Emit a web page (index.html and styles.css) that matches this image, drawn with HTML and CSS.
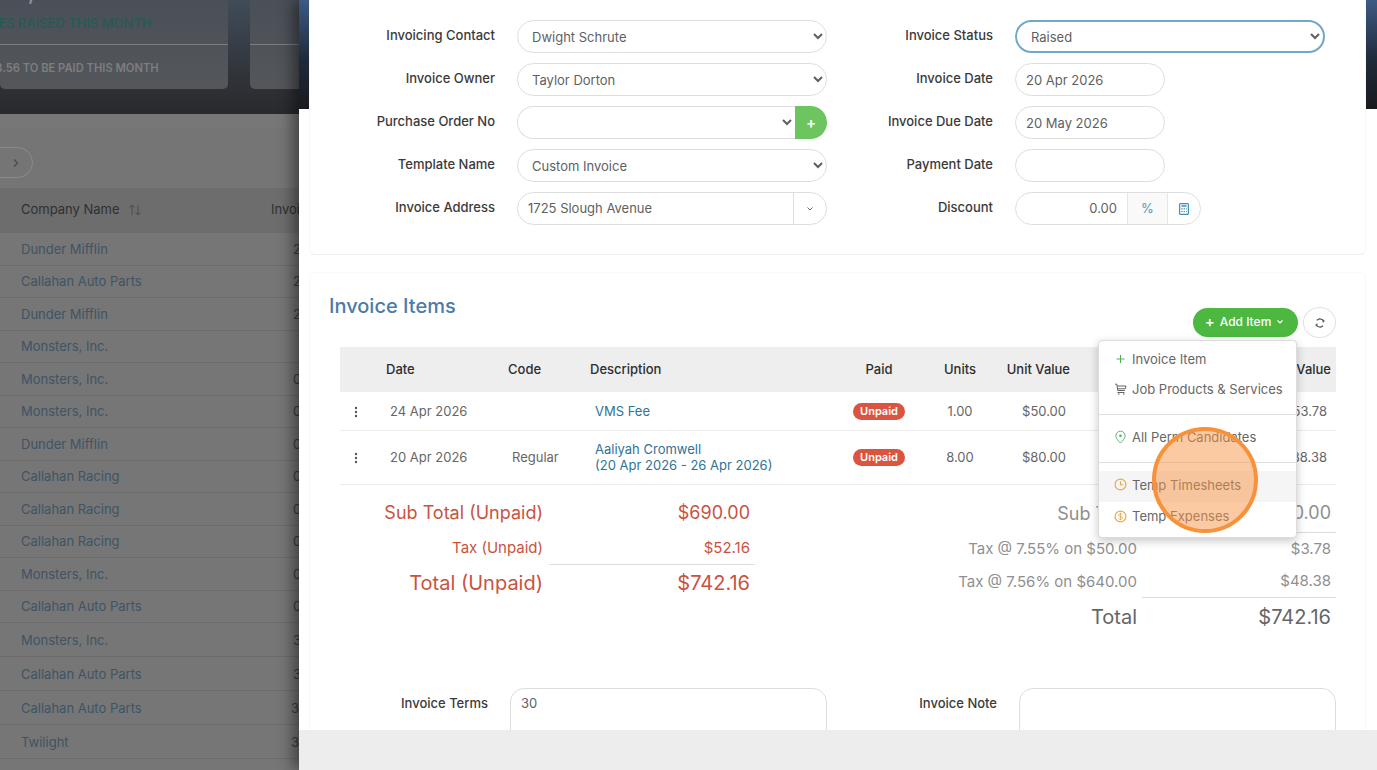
FILE: index.html
```html
<!DOCTYPE html>
<html lang="en">
<head>
<meta charset="utf-8">
<title>Invoice</title>
<link rel="stylesheet" href="styles.css">
</head>
<body>
<div class="page">
  <aside class="backdrop">
    <header class="stats">
      <div class="stat stat-main">
        <div class="stat-top">
          <div class="stat-big">$27,943.56</div>
          <div class="stat-sub">INVOICES RAISED THIS MONTH</div>
        </div>
        <div class="stat-foot">$27,943.56 TO BE PAID THIS MONTH</div>
      </div>
      <div class="stat stat-next"><div class="stat-top"></div><div class="stat-foot"></div></div>
    </header>
    <div class="toolbar">
      <div class="pager"><svg width="8" height="10" viewBox="0 0 8 10"><path d="M2 1.500 5.500 5 2 8.500" fill="none" stroke="#4a4a4a" stroke-width="1.200"/></svg></div>
    </div>
    <div class="bg-head">
      <span class="bg-name">Company Name <svg class="sort" width="14" height="12" viewBox="0 0 14 12"><path d="M4 11V1M1.500 3.500 4 1l2.500 2.500M10 1v10M7.500 8.500 10 11l2.500-2.500" fill="none" stroke="#4c4c4c" stroke-width="1"/></svg></span>
      <span class="bg-col">Invoice</span>
    </div>
    <div class="bg-row"><span class="bg-name">Dunder Mifflin</span><span class="bg-val">2</span></div>
    <div class="bg-row"><span class="bg-name">Callahan Auto Parts</span><span class="bg-val">2</span></div>
    <div class="bg-row"><span class="bg-name">Dunder Mifflin</span><span class="bg-val">2</span></div>
    <div class="bg-row"><span class="bg-name">Monsters, Inc.</span><span class="bg-val"></span></div>
    <div class="bg-row"><span class="bg-name">Monsters, Inc.</span><span class="bg-val">0</span></div>
    <div class="bg-row"><span class="bg-name">Monsters, Inc.</span><span class="bg-val">0</span></div>
    <div class="bg-row"><span class="bg-name">Dunder Mifflin</span><span class="bg-val">0</span></div>
    <div class="bg-row"><span class="bg-name">Callahan Racing</span><span class="bg-val">0</span></div>
    <div class="bg-row"><span class="bg-name">Callahan Racing</span><span class="bg-val">0</span></div>
    <div class="bg-row"><span class="bg-name">Callahan Racing</span><span class="bg-val">0</span></div>
    <div class="bg-row"><span class="bg-name">Monsters, Inc.</span><span class="bg-val">0</span></div>
    <div class="bg-row"><span class="bg-name">Callahan Auto Parts</span><span class="bg-val">0</span></div>
    <div class="bg-row bg-row-tall"><span class="bg-name">Monsters, Inc.</span><span class="bg-val">3</span></div>
    <div class="bg-row bg-row-tall"><span class="bg-name">Callahan Auto Parts</span><span class="bg-val">3</span></div>
    <div class="bg-row bg-row-tall"><span class="bg-name">Callahan Auto Parts</span><span class="bg-val bg-val-wide">3</span></div>
    <div class="bg-row bg-row-tall"><span class="bg-name">Twilight</span><span class="bg-val bg-val-wide">3</span></div>
  </aside>

  <main class="drawer">
    <div class="scroller">
      <section class="card card-form">
        <div class="form-grid">
          <label class="lbl">Invoicing Contact</label>
          <select class="ctl"><option>Dwight Schrute</option></select>
          <label class="lbl">Invoice Status</label>
          <select class="ctl ctl-focus"><option>Raised</option></select>

          <label class="lbl">Invoice Owner</label>
          <select class="ctl"><option>Taylor Dorton</option></select>
          <label class="lbl">Invoice Date</label>
          <input class="ctl ctl-date" value="20 Apr 2026">

          <label class="lbl">Purchase Order No</label>
          <div class="group">
            <select class="ctl ctl-join"></select>
            <button class="add-btn">+</button>
          </div>
          <label class="lbl">Invoice Due Date</label>
          <input class="ctl ctl-date" value="20 May 2026">

          <label class="lbl">Template Name</label>
          <select class="ctl"><option>Custom Invoice</option></select>
          <label class="lbl">Payment Date</label>
          <input class="ctl ctl-date" value="">

          <label class="lbl">Invoice Address</label>
          <div class="addr">
            <span class="addr-text">1725 Slough Avenue</span>
            <span class="addr-btn"><svg width="8" height="6" viewBox="0 0 8 6"><path d="M1.500 1.500 4 4l2.500-2.500" fill="none" stroke="#666" stroke-width="1"/></svg></span>
          </div>
          <label class="lbl">Discount</label>
          <div class="discount">
            <span class="disc-val">0.00</span>
            <span class="disc-pct">%</span>
            <span class="disc-calc"><svg width="10" height="12" viewBox="0 0 10 12"><rect x=".6" y=".6" width="8.800" height="10.800" rx="1" fill="none" stroke="#3f8fb5" stroke-width="1.200"/><path d="M2.500 3h5" stroke="#3f8fb5" stroke-width="1.400"/><path d="M2.200 5.800h1.400m1 0h1.400m1 0h.8M2.200 8.500h1.400m1 0h1.400m1 0h.8" stroke="#3f8fb5" stroke-width="1.200"/></svg></span>
          </div>
        </div>
      </section>

      <section class="card card-items">
        <div class="items-head">
          <h2 class="items-title">Invoice Items</h2>
          <div class="items-actions">
            <button class="btn-add"><span class="btn-plus">+</span> Add Item <svg width="8" height="6" viewBox="0 0 8 6"><path d="M1.500 1.500 4 4l2.500-2.500" fill="none" stroke="#fff" stroke-width="1.200"/></svg></button>
            <button class="btn-round"><svg width="12" height="12" viewBox="0 0 12 12"><path d="M9.700 4.300A4 4 0 0 0 2.900 3.400M2.300 7.700A4 4 0 0 0 9.100 8.600" fill="none" stroke="#444" stroke-width="1.100"/><path d="M10 2.800v2H8M2 9.200v-2h2" fill="none" stroke="#444" stroke-width=".7"/></svg></button>
          </div>
        </div>

        <table class="items">
          <colgroup><col class="c-menu"><col class="c-date"><col class="c-code"><col class="c-desc"><col class="c-paid"><col class="c-units"><col class="c-unit"><col class="c-tax"><col class="c-val"></colgroup>
          <thead>
            <tr><th></th><th>Date</th><th>Code</th><th>Description</th><th class="ctr">Paid</th><th class="ctr">Units</th><th class="rgt">Unit Value</th><th></th><th class="rgt">Value</th></tr>
          </thead>
          <tbody>
            <tr class="row-a">
              <td class="menu"><svg width="4" height="12" viewBox="0 0 4 12"><circle cx="2" cy="2" r="1.200"/><circle cx="2" cy="6" r="1.200"/><circle cx="2" cy="10" r="1.200"/></svg></td>
              <td>24 Apr 2026</td><td></td><td class="desc">VMS Fee</td>
              <td class="ctr"><span class="badge">Unpaid</span></td><td class="ctr">1.00</td><td class="rgt">$50.00</td><td></td><td class="rgt">$53.78</td>
            </tr>
            <tr class="row-b">
              <td class="menu"><svg width="4" height="12" viewBox="0 0 4 12"><circle cx="2" cy="2" r="1.200"/><circle cx="2" cy="6" r="1.200"/><circle cx="2" cy="10" r="1.200"/></svg></td>
              <td>20 Apr 2026</td><td>Regular</td><td class="desc">Aaliyah Cromwell<br>(20 Apr 2026 - 26 Apr 2026)</td>
              <td class="ctr"><span class="badge">Unpaid</span></td><td class="ctr">8.00</td><td class="rgt">$80.00</td><td></td><td class="rgt">$688.38</td>
            </tr>
          </tbody>
        </table>

        <div class="totals">
          <div class="tot tot-unpaid">
            <div class="t-row t-sub"><span class="t-l">Sub Total (Unpaid)</span><span class="t-v">$690.00</span></div>
            <div class="t-row t-tax t-ruled"><span class="t-l">Tax (Unpaid)</span><span class="t-v">$52.16</span></div>
            <div class="t-row t-total"><span class="t-l">Total (Unpaid)</span><span class="t-v">$742.16</span></div>
          </div>
          <div class="tot tot-all">
            <div class="t-row t-sub t-ruled"><span class="t-l">Sub Total</span><span class="t-v">$690.00</span></div>
            <div class="t-row t-tax"><span class="t-l">Tax @ 7.55% on $50.00</span><span class="t-v">$3.78</span></div>
            <div class="t-row t-tax t-ruled"><span class="t-l">Tax @ 7.56% on $640.00</span><span class="t-v">$48.38</span></div>
            <div class="t-row t-total"><span class="t-l">Total</span><span class="t-v">$742.16</span></div>
          </div>
        </div>

        <div class="notes">
          <label class="lbl">Invoice Terms</label>
          <textarea class="note-box">30</textarea>
          <label class="lbl">Invoice Note</label>
          <textarea class="note-box"></textarea>
        </div>

        <div class="menu-pop">
          <div class="pop-item"><svg class="pop-ic" width="12" height="12" viewBox="0 0 12 12"><path d="M6 2v8M2 6h8" stroke="#4fb04f" stroke-width="1"/></svg>Invoice Item</div>
          <div class="pop-item"><svg class="pop-ic" width="13" height="12" viewBox="0 0 13 12"><path d="M1 1.200h1.800l1 6.300h7M3 3h9l-.8 2.800H3.400" fill="none" stroke="#555" stroke-width=".9"/><path d="M3.500 9.500h7" stroke="#555" stroke-width=".9"/><path d="M4 11h1.500M9 11h1.500" stroke="#555" stroke-width="1"/></svg>Job Products &amp; Services</div>
          <div class="pop-sep"></div>
          <div class="pop-item"><svg class="pop-ic" width="12" height="14" viewBox="0 0 12 14"><path d="M6 13C3.500 10.500 1.400 8.300 1.400 5.800a4.600 4.600 0 0 1 9.200 0C10.600 8.300 8.500 10.500 6 13Z" fill="none" stroke="#5fb56f" stroke-width="1"/><circle cx="6" cy="5.800" r="1.400" fill="#5fb56f"/></svg>All Perm Candidates</div>
          <div class="pop-sep"></div>
          <div class="pop-item pop-hover"><svg class="pop-ic" width="13" height="13" viewBox="0 0 12 12"><circle cx="6" cy="6" r="5" fill="none" stroke="#e9a84e" stroke-width="1.100"/><path d="M6 3v3.300h2.500" fill="none" stroke="#e9a84e" stroke-width="1"/></svg>Temp Timesheets</div>
          <div class="pop-item pop-last"><svg class="pop-ic" width="13" height="13" viewBox="0 0 12 12"><circle cx="6" cy="6" r="5" fill="none" stroke="#e9a84e" stroke-width="1.100"/><path d="M7.700 4.300C7.300 3.600 6.700 3.400 6 3.400c-1 0-1.700.5-1.700 1.300 0 1.800 3.500.8 3.500 2.600 0 .8-.8 1.300-1.800 1.300-.8 0-1.500-.3-1.900-1M6 2.500v7" fill="none" stroke="#e9a84e" stroke-width=".8"/></svg>Temp Expenses</div>
        </div>
      </section>
    </div>
    <footer class="drawer-foot"></footer>
    <div class="click-spot"></div>
  </main>
</div>
</body>
</html>
```

FILE: styles.css
```css
* { box-sizing: border-box; }
html, body { margin: 0; height: 100%; overflow: hidden; }
body { font-family: Inter, "Liberation Sans", sans-serif; font-size: 13px; color: #666; background: #fff; }
.page { display: flex; width: 1377px; height: 770px; overflow: hidden; }

/* dimmed page behind the drawer */
.backdrop { width: 299px; flex: none; height: 770px; overflow: hidden; background: #767676; }
.stats { height: 114px; display: flex; gap: 22px; background: linear-gradient(#414c59, #2f3238 70%, #292a2c); }
.stat { height: 89px; display: flex; flex-direction: column; background: linear-gradient(#4a5058, #54565a); border-radius: 0 0 5px 5px; overflow: hidden; }
.stat-main { width: 228px; flex: none; }
.stat-next { width: 60px; flex: none; border-radius: 0 0 0 5px; }
.stat-top { height: 45px; border-bottom: 1px solid #7c7f83; }
.stat-big { font-size: 28px; line-height: 32px; margin: -27px 0 0 -20px; color: #8a9099; white-space: nowrap; }
.stat-sub { margin: 5px 0 0 -47px; font-size: 13px; line-height: 26px; font-weight: 500; color: #245c54; white-space: nowrap; }
.stat-foot { margin: 16px 0 0 -42px; font-size: 11.200px; line-height: 14px; font-weight: 600; color: #7d7e80; white-space: nowrap; }
.toolbar { height: 74px; padding-top: 33px; background: linear-gradient(#777 14px, #757575 14px); }
.pager { width: 34px; height: 31px; border: 1px solid #8b8b8b; border-radius: 0 16px 16px 0; display: flex; align-items: center; justify-content: center; margin-left: -1px; }
.bg-head { height: 45px; background: #6d6d6d; display: flex; align-items: center; padding: 0 0 4px 21px; color: #303030; font-weight: 400; white-space: nowrap; }
.bg-head .bg-name { width: 250px; flex: none; }
.sort { vertical-align: -2px; margin-left: 5px; }
.bg-row { height: 32.500px; display: flex; align-items: center; padding-left: 21px; border-bottom: 1px solid #6b6b6b; white-space: nowrap; }
.bg-row-tall { height: 34px; }
.bg-row .bg-name { width: 272px; flex: none; color: #3f5464; }
.bg-val { color: #3c3c3c; }
.bg-val-wide { margin-left: -2px; }

/* drawer */
.drawer { position: relative; flex: 1; height: 770px; display: flex; flex-direction: column; background: #fff linear-gradient(#3c5a84, #1f2a3a 55%, #191a1d) no-repeat 0 0 / 100% 109px; box-shadow: -6px 0 14px rgba(0, 0, 0, .45); z-index: 1; }
.scroller { flex: 1; min-height: 0; overflow: hidden; padding: 0 11px 0 10px; }
.drawer-foot { height: 40px; flex: none; background: #ededed; }

.card { background: #fff; border: 1px solid #f9f9f9; border-radius: 6px; }
.card-form { height: 266px; margin-top: -11px; padding-top: 30px; border-bottom-color: #eee; }
.card-items { position: relative; margin-top: 17px; height: 600px; }

.form-grid { display: grid; grid-template-columns: 185px 310px 144px auto; column-gap: 22px; row-gap: 10px; grid-auto-rows: 33px; align-items: center; justify-items: start; }
.lbl { justify-self: end; font-size: 13px; font-weight: 500; color: #3a3a3a; line-height: 16px; margin-top: -3px; white-space: nowrap; }
.ctl { width: 310px; height: 33px; border: 1px solid #dedede; border-radius: 17px; background: #fff; font: 13px Inter, sans-serif; color: #5f5f5f; padding: 0 6px 0 10px; outline: none; }
.ctl-focus { border: 2px solid #6fa8c9; padding-left: 10px; }
.ctl-date { width: 150px; }
.group { display: flex; width: 310px; height: 33px; }
.ctl-join { width: 278px; border-right: 0; border-radius: 17px 0 0 17px; }
.add-btn { width: 32px; height: 33px; border: 0; padding: 0; background: #6cc55f; color: #fff; font: 600 15px Inter, sans-serif; border-radius: 0 17px 17px 0; }
.addr { display: flex; width: 310px; height: 33px; border: 1px solid #dedede; border-radius: 17px; }
.addr-text { flex: 1; padding: 0 0 0 10px; line-height: 31px; color: #5f5f5f; }
.addr-btn { width: 33px; border-left: 1px solid #dedede; display: flex; align-items: center; justify-content: center; }
.discount { display: flex; width: 186px; height: 33px; border: 1px solid #dedede; border-radius: 17px; overflow: hidden; align-items: stretch; }
.disc-val { width: 111px; text-align: right; padding: 0 10px 0 0; line-height: 31px; color: #5f5f5f; }
.disc-pct { width: 41px; background: #f9f9f9; border-left: 1px solid #e6e6e6; border-right: 1px solid #e6e6e6; text-align: center; color: #4f97bb; line-height: 31px; }
.disc-calc { flex: 1; display: flex; align-items: center; justify-content: center; }

.items-head { display: flex; justify-content: space-between; padding: 21px 29px 0 19px; height: 74px; }
.items-title { margin: 0; font-size: 20px; line-height: 24px; font-weight: 500; color: #4b7bab; }
.items-actions { display: flex; gap: 5px; align-items: flex-start; padding-top: 13px; }
.btn-add { width: 105px; height: 29px; margin-top: 1px; border: 0; border-radius: 15px; background: #4cb83f; color: #fff; font: 500 12px Inter, sans-serif; padding: 0 2px 2px 0; display: flex; align-items: center; justify-content: center; gap: 5px; }
.btn-plus { font-size: 15px; line-height: 14px; }
.btn-round { width: 33px; height: 31px; padding: 0; background: #fff; border: 1px solid #e2e2e2; border-radius: 50%; display: flex; align-items: center; justify-content: center; }

.items { width: 996px; margin: 0 0 0 30px; border-collapse: collapse; table-layout: fixed; }
.c-menu { width: 36px; } .c-date { width: 122px; } .c-code { width: 82px; } .c-desc { width: 260px; }
.c-paid { width: 78px; } .c-units { width: 84px; } .c-unit { width: 73px; } .c-tax { width: 135px; } .c-val { width: 126px; }
.items th { height: 45px; background: #eee; font-size: 13px; font-weight: 500; color: #2d2d2d; text-align: left; padding: 0 0 2px 10px; white-space: nowrap; }
.items td { font-size: 13px; line-height: 16px; color: #666; padding: 0 0 0 14px; border-bottom: 1px solid #ececec; white-space: nowrap; }
.row-a td { height: 38px; }
.row-b td { height: 54px; }
.items th.ctr { text-align: center; padding: 0 0 2px; }
.items td.ctr { text-align: center; padding: 0; }
.items th.rgt { text-align: right; padding: 0 5px 2px 0; }
.items td.rgt { text-align: right; padding: 0 9px 0 0; }
.items td.menu { padding: 0 4px 0 0; text-align: center; }
.menu svg { fill: #555; display: inline-block; vertical-align: middle; }
.items td.desc { color: #2f7396; padding-left: 15px; }
.badge { display: inline-block; width: 52px; height: 17px; line-height: 17px; border-radius: 9px; background: #db5440; color: #fff; font-size: 11px; font-weight: 600; text-align: center; vertical-align: middle; }

.totals { display: flex; justify-content: space-between; align-items: flex-start; margin: 10px 29px 0 30px; height: 193px; }
.tot { display: grid; }
.tot-unpaid { width: 415px; color: #c9533f; }
.tot-all { width: 396px; color: #8f8f8f; margin-top: -1px; }
.t-row { display: grid; align-items: center; }
.tot-unpaid .t-row { grid-template-columns: 203px 206px; column-gap: 6px; }
.tot-all .t-row { grid-template-columns: 197px 194px; column-gap: 5px; }
.t-l { text-align: right; white-space: nowrap; }
.t-v { text-align: right; padding-right: 5px; }
.tot-unpaid .t-row.t-ruled .t-v { border-bottom: 1px solid #dcdcdc; }
.tot-all .t-row.t-ruled .t-v { border-bottom: 1px solid #dcdcdc; }
.t-sub { font-size: 18px; }
.t-tax { font-size: 15px; }
.t-total { font-size: 20px; }
.tot-all .t-total { color: #666; }
.tot-unpaid .t-sub .t-v { line-height: 36px; }
.tot-unpaid .t-sub .t-l { line-height: 36px; }
.tot-unpaid .t-tax .t-v { line-height: 33px; }
.tot-unpaid .t-total .t-v { line-height: 36px; }
.tot-all .t-sub .t-v { line-height: 38px; }
.tot-all .t-tax .t-v { line-height: 32px; }
.tot-all .t-total .t-v { line-height: 38px; }

.notes { display: grid; grid-template-columns: 178px 317px 148px 317px; column-gap: 22px; align-items: start; }
.notes .lbl { margin-top: 7px; }
.note-box { width: 317px; height: 90px; border: 1px solid #dedede; border-radius: 14px; padding: 6px 10px; font: 13px/16px Inter, sans-serif; color: #5f5f5f; resize: none; outline: none; background: #fff; }

.menu-pop { position: absolute; left: 788px; top: 67px; width: 199px; height: 198px; padding: 3px 0 0; background: #fff; border: 1px solid #dcdcdc; border-radius: 4px; box-shadow: 0 3px 10px rgba(0, 0, 0, .22); }
.pop-item { height: 30px; display: flex; align-items: center; padding-left: 15px; font-size: 13px; color: #666; white-space: nowrap; }
.pop-ic { width: 13px; margin-right: 5px; flex: none; }
.pop-sep { height: 1px; background: #e0e0e0; margin: 10px 0 7px; }
.pop-hover { height: 31px; margin-top: 8px; padding-bottom: 4px; background: #f5f5f5; }
.pop-last { padding-bottom: 2px; }

.click-spot { position: absolute; left: 853px; top: 427px; width: 106px; height: 106px; border: 4px solid #f7913a; border-radius: 50%; background: rgba(248, 150, 70, .5); }
```
